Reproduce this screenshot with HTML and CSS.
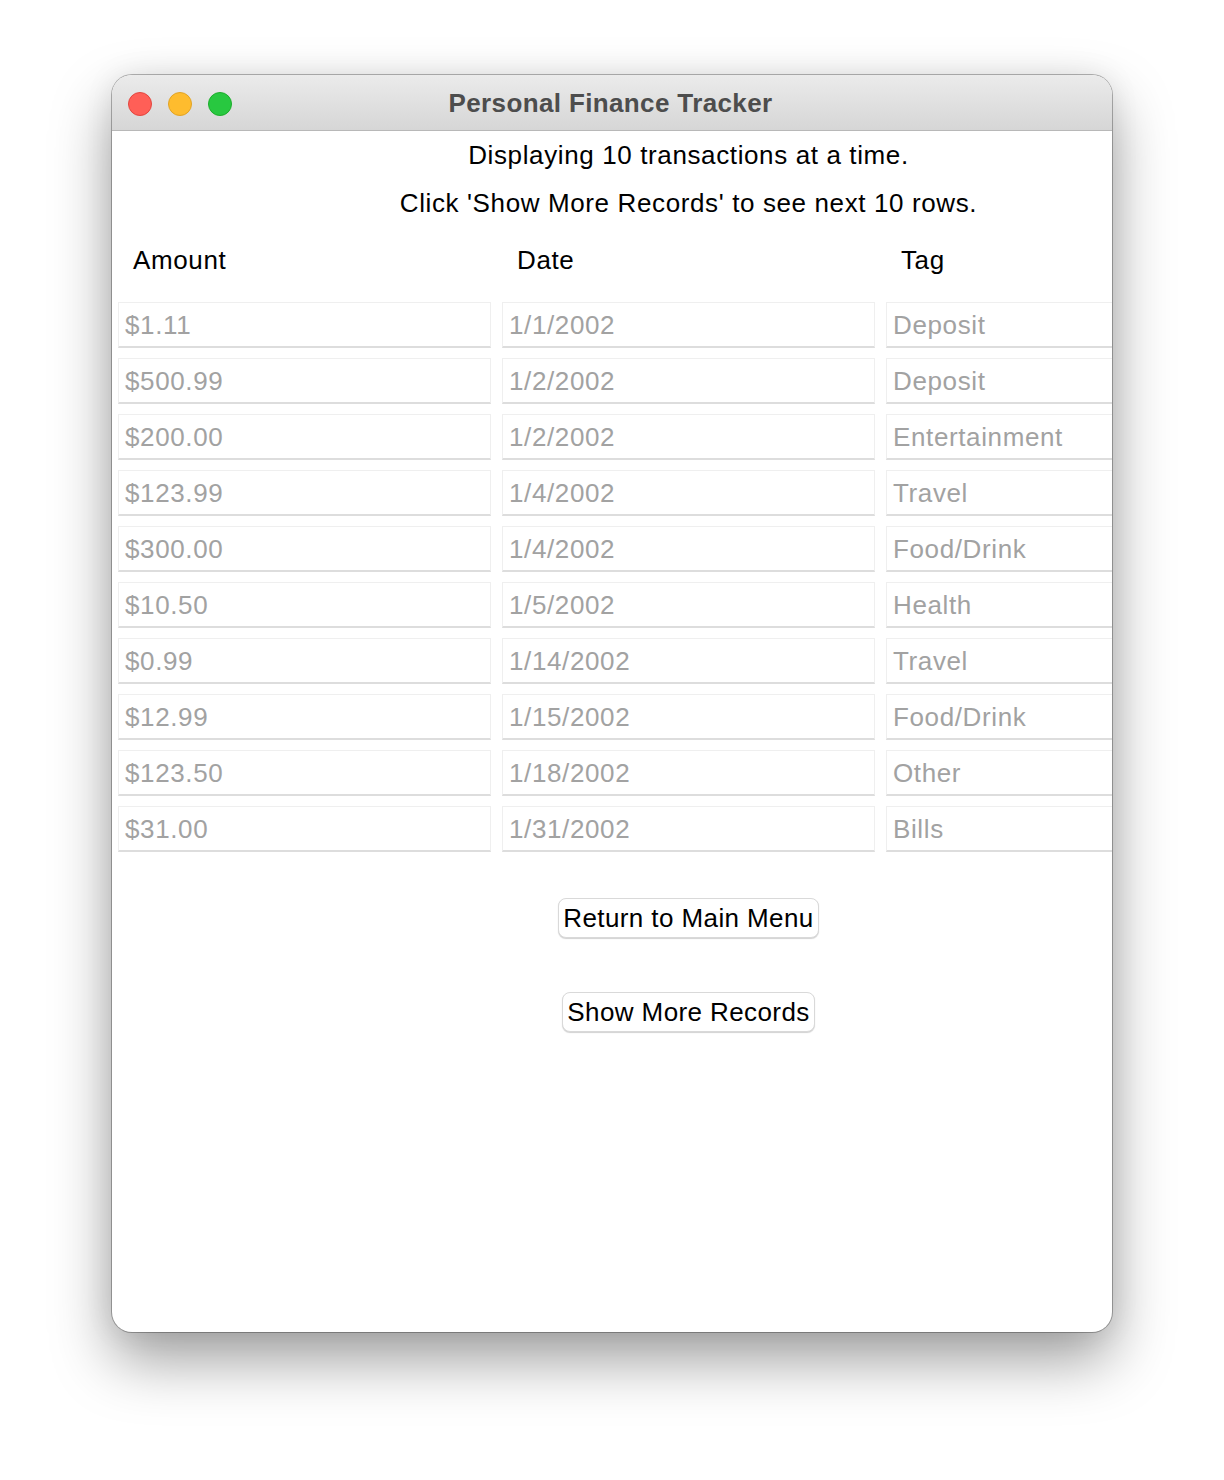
FILE: index.html
```html
<!DOCTYPE html>
<html>
<head>
<meta charset="utf-8">
<link rel="stylesheet" href="styles.css">
</head>
<body>
<div class="window">
  <div class="titlebar">
    <div class="lights">
      <span class="light red"></span>
      <span class="light yellow"></span>
      <span class="light green"></span>
    </div>
    <div class="title">Personal Finance Tracker</div>
    <div></div>
  </div>
  <div class="content">
    <div class="panel">
      <p class="line line1">Displaying 10 transactions at a time.</p>
      <p class="line line2">Click 'Show More Records' to see next 10 rows.</p>
      <div class="grid">
        <div class="head">Amount</div>
        <div class="head">Date</div>
        <div class="head">Tag</div>
        <div class="field">$1.11</div><div class="field">1/1/2002</div><div class="field">Deposit</div>
        <div class="field">$500.99</div><div class="field">1/2/2002</div><div class="field">Deposit</div>
        <div class="field">$200.00</div><div class="field">1/2/2002</div><div class="field">Entertainment</div>
        <div class="field">$123.99</div><div class="field">1/4/2002</div><div class="field">Travel</div>
        <div class="field">$300.00</div><div class="field">1/4/2002</div><div class="field">Food/Drink</div>
        <div class="field">$10.50</div><div class="field">1/5/2002</div><div class="field">Health</div>
        <div class="field">$0.99</div><div class="field">1/14/2002</div><div class="field">Travel</div>
        <div class="field">$12.99</div><div class="field">1/15/2002</div><div class="field">Food/Drink</div>
        <div class="field">$123.50</div><div class="field">1/18/2002</div><div class="field">Other</div>
        <div class="field">$31.00</div><div class="field">1/31/2002</div><div class="field">Bills</div>
      </div>
      <div class="buttons">
        <button class="btn">Return to Main Menu</button>
        <button class="btn">Show More Records</button>
      </div>
    </div>
  </div>
</div>
</body>
</html>
```

FILE: styles.css
```css
html, body {
  margin: 0;
  padding: 0;
  background: #ffffff;
}
body {
  width: 1224px;
  height: 1480px;
  overflow: hidden;
  font-family: "Liberation Sans", Arial, sans-serif;
}
.window {
  margin: 75px 0 0 112px;
  width: 1000px;
  height: 1257px;
  border-radius: 20px;
  overflow: hidden;
  background: #ffffff;
  box-shadow: 0 0 0 1px rgba(0,0,0,0.28), 0 28px 60px rgba(0,0,0,0.38), 0 0 30px rgba(0,0,0,0.08);
  display: flex;
  flex-direction: column;
}
.titlebar {
  height: 55px;
  flex-shrink: 0;
  background: linear-gradient(#ebebeb, #d6d6d6);
  border-bottom: 1px solid #b8b8b8;
  display: grid;
  grid-template-columns: 1fr auto 1fr;
  align-items: center;
}
.lights {
  display: flex;
  gap: 16px;
  padding-left: 16px;
  padding-top: 2px;
}
.light {
  width: 24px;
  height: 24px;
  border-radius: 50%;
  box-sizing: border-box;
}
.red { background: #ff5f57; border: 1px solid #e2463f; }
.yellow { background: #febc2e; border: 1px solid #e1a325; }
.green { background: #28c840; border: 1px solid #1dad2b; }
.title {
  font-weight: bold;
  font-size: 26px;
  letter-spacing: 0.37px;
  color: #4d4d4d;
  padding-top: 1px;
  margin-left: -3px;
}
.content {
  flex: 1;
  display: flex;
  overflow: hidden;
}
.panel {
  flex-shrink: 0;
  width: 1141px;
  margin-left: 6px;
  font-size: 26px;
  letter-spacing: 0.62px;
  color: #000;
}
.line {
  margin: 0;
  text-align: center;
  line-height: 30px;
}
.line1 { margin-top: 9px; }
.line2 { margin-top: 18px; }
.grid {
  margin-top: 28px;
  display: grid;
  grid-template-columns: repeat(3, 373px);
  column-gap: 11px;
  row-gap: 10px;
}
.head {
  padding-left: 15px;
  line-height: 30px;
  margin-bottom: 17px;
  margin-top: -1px;
}
.field {
  height: 46px;
  box-sizing: border-box;
  border: 1px solid #efefef;
  border-bottom: 2px solid #dddddd;
  color: #a2a2a2;
  padding-left: 6px;
  line-height: 44px;
  white-space: nowrap;
}
.buttons {
  margin-top: 46px;
  display: flex;
  flex-direction: column;
  align-items: center;
  gap: 54px;
}
.btn {
  font-family: "Liberation Sans", Arial, sans-serif;
  font-size: 26px;
  letter-spacing: 0.4px;
  color: #000;
  background: #ffffff;
  height: 40px;
  padding: 0 4px;
  border: 1px solid #d9d9d9;
  border-radius: 8px;
  box-shadow: 0 1px 1px rgba(0,0,0,0.18);
  line-height: 36px;
}
```
